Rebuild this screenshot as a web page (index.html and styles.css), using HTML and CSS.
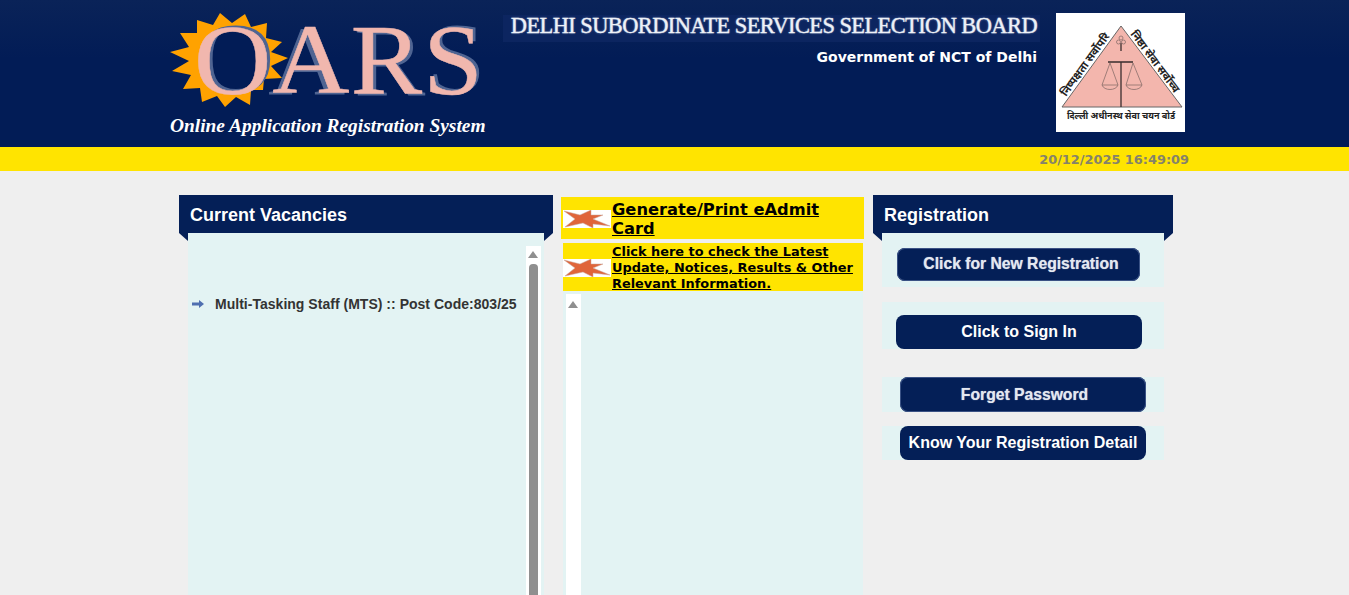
FILE: index.html
```html
<!DOCTYPE html>
<html lang="en">
<head>
<meta charset="utf-8">
<title>OARS - Online Application Registration System</title>
<link rel="stylesheet" href="styles.css">
</head>
<body>
<header class="masthead">
  <div class="masthead-inner">
    <div class="brand">
      <div class="brand-mark">
        <svg class="sun" width="120" height="100" viewBox="0 0 120 100">
          <polygon class="sun-rays" points="50,1 62,11 75,2 81,15 97,11 96,26 112,30 101,40 118,46 101,54 112,66 94,67 93,78 81,78 80,93 66,85 55,95 47,84 32,90 30,76 13,77 21,63 2,59 19,49 0,40 19,35 10,21 27,21 27,8 43,13"/>
          <ellipse class="sun-core" cx="62" cy="48" rx="32" ry="31"/>
        </svg>
        <div class="brand-word"><span class="l-o">O</span><span class="l-a">A</span><span class="l-r">R</span><span class="l-s">S</span></div>
      </div>
      <div class="brand-tag">Online Application Registration System</div>
    </div>
    <div class="board">
      <div class="board-name"><span>DELHI SUBORDINATE SERVICES SELECTION BOARD</span></div>
      <div class="board-gov">Government of NCT of Delhi</div>
    </div>
    <div class="emblem">
      <svg width="129" height="119" viewBox="0 0 129 119">
        <polygon class="em-tri" points="65,13 6,94 126,94"/>
        <path class="em-line" d="M52 49H77M65 49V94"/>
        <path class="em-thin" d="M54 50L46 72C48 78 60 78 62 72L54 50ZM46 72H62M77 50L70 72C72 78 84 78 86 72L77 50ZM70 72H86"/>
        <path class="em-line" d="M65 30V38"/>
        <circle class="em-thin" cx="62.5" cy="29" r="2"/>
        <circle class="em-thin" cx="67.5" cy="29" r="2"/>
        <circle class="em-thin" cx="65" cy="25" r="2"/>
        <path id="em-left" class="em-none" d="M10 84L58 18"/>
        <path id="em-right" class="em-none" d="M74 21L118 80"/>
        <text class="em-text em-side"><textPath href="#em-left">निष्पक्षता सर्वोपरि</textPath></text>
        <text class="em-text em-side"><textPath href="#em-right">निष्ठा सेवा सर्वोच्च</textPath></text>
        <text class="em-text" x="65" y="106" text-anchor="middle">दिल्ली अधीनस्थ सेवा चयन बोर्ड</text>
      </svg>
    </div>
  </div>
</header>
<div class="clockbar"><span class="clock">20/12/2025 16:49:09</span></div>
<main class="columns">
  <section class="panel panel-left">
    <h2 class="panel-head">Current Vacancies</h2>
    <div class="panel-body vacancies">
      <ul class="vacancy-list">
        <li class="vacancy">
          <svg class="arrow" width="12" height="8" viewBox="0 0 12 8"><path d="M0 2.5H7V0L12 4L7 8V5.5H0Z"/></svg>
          <span>Multi-Tasking Staff (MTS) :: Post Code:803/25</span>
        </li>
      </ul>
      <div class="scroll scroll-left"><i class="scroll-up"></i><i class="scroll-thumb"></i></div>
    </div>
  </section>
  <section class="panel panel-center">
    <a class="notice notice-main" href="#">
      <svg class="star" width="48" height="18" viewBox="0 0 48 18"><rect width="48" height="18" fill="#fff"/><polygon class="star-shape" points="1,1 17,5 28,0 28,5 40,5 30,9 47,16 30,14 30,18 20,13 2,17 12,9"/></svg>
      <span>Generate/Print eAdmit Card</span>
    </a>
    <a class="notice notice-sub" href="#">
      <svg class="star" width="48" height="18" viewBox="0 0 48 18"><rect width="48" height="18" fill="#fff"/><polygon class="star-shape" points="1,1 17,5 28,0 28,5 40,5 30,9 47,16 30,14 30,18 20,13 2,17 12,9"/></svg>
      <span>Click here to check the Latest Update, Notices, Results &amp; Other Relevant Information.</span>
    </a>
    <div class="panel-body notices">
      <div class="scroll scroll-center"><i class="scroll-up"></i></div>
    </div>
  </section>
  <section class="panel panel-right">
    <h2 class="panel-head">Registration</h2>
    <div class="reg-box reg-new"><a class="btn btn-soft btn-new" href="#">Click for New Registration</a></div>
    <div class="reg-box reg-sign"><a class="btn btn-sign" href="#">Click to Sign In</a></div>
    <div class="reg-box reg-forget"><a class="btn btn-soft btn-forget" href="#">Forget Password</a></div>
    <div class="reg-box reg-know"><a class="btn btn-know" href="#">Know Your Registration Detail</a></div>
  </section>
</main>
</body>
</html>
```
FILE: styles.css
```css
* { box-sizing: border-box; }
html, body { height: 595px; overflow: hidden; }
body { margin: 0; background: #efefef; font-family: "Liberation Sans", Arial, sans-serif; }

.masthead { height: 147px; background: linear-gradient(#0a2358, #021c56 40%); }
.masthead-inner { width: 1021px; margin-left: 164px; display: flex; height: 100%; }

.brand { width: 339px; padding: 12px 0 0 6px; }
.brand-mark { position: relative; height: 96px; }
.sun { display: block; }
.sun-rays { fill: #ffa200; }
.sun-core { fill: #021c56; }
.brand-word {
  position: absolute; left: 24px; top: -7px; transform: scaleX(1.07); transform-origin: left;
  font: 100px/110px "Liberation Serif", serif; letter-spacing: 1px;
  color: #f1b7ae; -webkit-text-stroke: .5px #f1b7ae; white-space: nowrap;
}
.l-o { text-shadow: 3px -2px 0 #4f6492; }
.l-a { text-shadow: -4px 2px 0 #4f6492; }
.l-r { text-shadow: 3px 2px 0 #4f6492; }
.l-s { text-shadow: 3px -2px 0 #4f6492; }
.brand-tag {
  margin-top: 8px; color: #fff; white-space: nowrap;
  font: italic bold 19.4px/20px "Liberation Serif", serif;
}

.board { width: 537px; padding-top: 15px; text-align: right; }
.board-name {
  height: 27px; background: #0c2560; padding-right: 3px;
  font: 22.4px/21px "Liberation Serif", serif; color: #eef1f7;
  white-space: nowrap; letter-spacing: -.55px;
  -webkit-text-stroke: .3px #eef1f7;
  text-shadow: 0 0 2px #8fa2c6;
}
.board-gov { margin-top: 4px; color: #fff; font: bold 14px/22px "DejaVu Sans", sans-serif; padding-right: 3px; }

.emblem { margin: 13px 0 0 16px; width: 129px; height: 119px; background: #fff; overflow: hidden; }
.emblem svg { display: block; }
.em-tri { fill: #f3b6ad; stroke: #666; stroke-width: 1; }
.em-line { stroke: #3a2e2e; stroke-width: 1.3; fill: none; }
.em-thin { stroke: #8a6f6b; stroke-width: .8; fill: none; }
.em-none { fill: none; }
.em-text { font: bold 9px "Noto Sans", "DejaVu Sans", sans-serif; fill: #222; }
.em-side { font-size: 11px; }

.clockbar { height: 24px; background: #ffe400; padding: 3px 160px 0 0; text-align: right; }
.clock { color: #85826a; font: bold 12.9px/15px "DejaVu Sans", sans-serif; }

.columns { display: flex; align-items: flex-start; padding: 24px 0 0 179px; }
.panel { height: 400px; }
.panel-left { width: 374px; }
.panel-center { width: 304px; margin: 2px 0 0 8px; }
.panel-right { width: 300px; margin-left: 8px; }

.panel-head {
  position: relative; margin: 0; height: 38px; padding-left: 11px;
  background: #041f57; color: #fff;
  font: bold 18px/40px "Liberation Sans", sans-serif;
}
.panel-head::before, .panel-head::after {
  content: ""; position: absolute; top: 100%; width: 0; height: 0;
  border-top: 8px solid #041f57;
}
.panel-head::before { left: 0; border-left: 9px solid transparent; }
.panel-head::after { right: 0; border-right: 9px solid transparent; }

.panel-body { background: #e3f3f3; }
.vacancies { margin: 0 9px; height: 362px; display: flex; justify-content: space-between; }
.vacancy-list { list-style: none; margin: 0; padding: 62px 0 0 4px; }
.vacancy { display: flex; align-items: center; gap: 11px; color: #333; font: bold 14px/18px "Liberation Sans", sans-serif; letter-spacing: .02px; white-space: nowrap; }
.arrow { fill: #4f6fb0; flex: none; }

.scroll { background: #fff; width: 15px; overflow: hidden; }
.scroll-left { margin: 13px 3px 0 0; }
.scroll-center { margin: 3px 0 0 3px; height: 301px; padding-top: 2px; }
.scroll-up {
  display: block; width: 0; height: 0; margin: 5px 0 0 2px;
  border-left: 5px solid transparent; border-right: 5px solid transparent; border-bottom: 7px solid #8f8f8f;
}
.scroll-thumb { display: block; width: 9px; height: 340px; margin: 6px 0 0 3px; background: #8f8f8f; border-radius: 4px 4px 0 0; }

.notice { display: flex; align-items: center; color: #000; background: #ffe400; font-family: "DejaVu Sans", sans-serif; font-weight: bold; text-decoration: underline; }
.notice-main { width: 303px; height: 42px; padding: 2px 0 0 2px; font-size: 16.3px; line-height: 19px; gap: 1px; }
.notice-sub { width: 300px; height: 48px; margin: 4px 0 0 2px; padding-top: 2px; font-size: 12.9px; line-height: 16px; gap: 1px; }
.star { flex: none; }
.star-shape { fill: #e0653a; stroke: #c9a79b; stroke-width: .5; }
.notices { width: 300px; margin-left: 2px; height: 304px; display: flow-root; }

.reg-box { margin: 0 9px; background: #e3f3f3; display: flex; }
.btn {
  display: flex; align-items: center; justify-content: center;
  background: #041f57; color: #fff; text-decoration: none;
  font: bold 16px/20px "Liberation Sans", sans-serif; border-radius: 8px; white-space: nowrap;
}
.btn-soft { color: #e4e8f0; box-shadow: inset 0 0 0 1px #3a5285; font-size: 15.7px; text-shadow: 0 0 1px #aab6cf; }
.reg-new { height: 54px; padding: 15px 0 0 15px; }
.btn-new { width: 243px; height: 33px; padding: 0 0 2px 5px; }
.reg-sign { height: 47px; margin-top: 15px; padding: 13px 0 0 14px; }
.btn-sign { width: 246px; height: 34px; }
.reg-forget { height: 35px; margin-top: 28px; padding-left: 18px; }
.btn-forget { width: 246px; height: 35px; padding-left: 3px; }
.reg-know { height: 34px; margin-top: 14px; padding-left: 18px; }
.btn-know { width: 246px; height: 34px; }
```
